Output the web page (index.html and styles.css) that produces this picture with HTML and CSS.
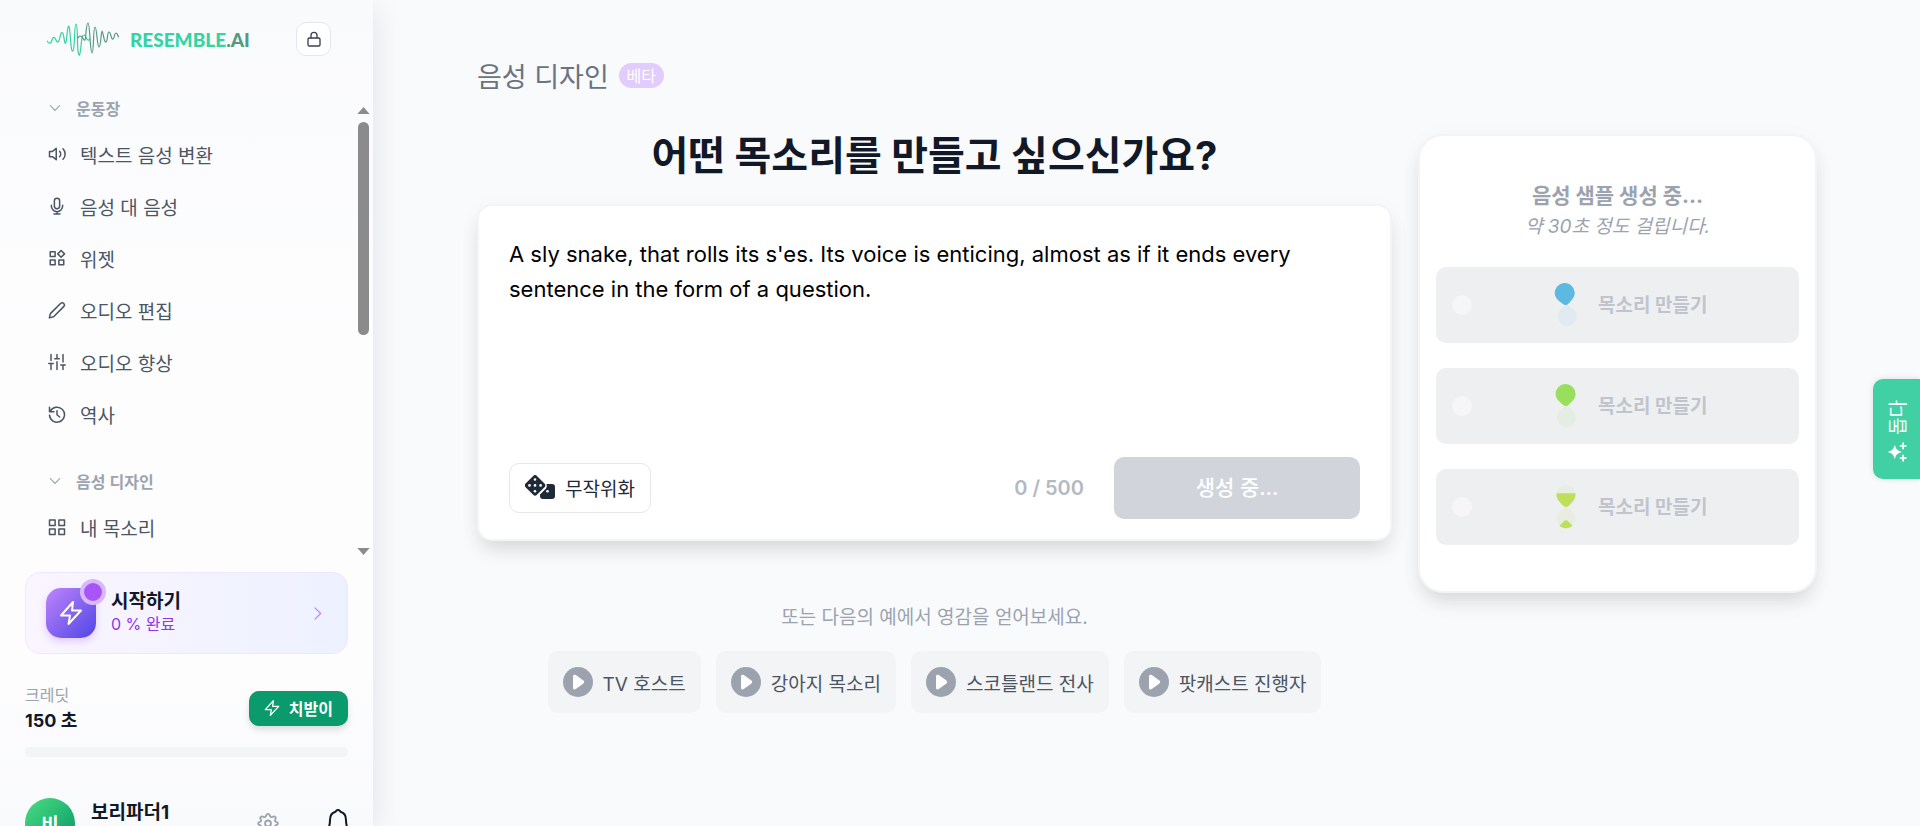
FILE: index.html
```html
<!DOCTYPE html>
<html lang="ko">
<head>
<meta charset="utf-8">
<meta name="viewport" content="width=device-width, initial-scale=1">
<title>음성 디자인 - Resemble.AI</title>
<link rel="stylesheet" href="styles.css">
</head>
<body>
<div class="app">
  <aside class="sidebar">
    <header class="brand">
      <a class="logo" href="#" aria-label="Resemble.AI">
        <svg class="wave" viewBox="0 0 72 34" fill="none" stroke-width="1.2" stroke-linecap="round" stroke-linejoin="round">
          <path stroke="#35d0a0" d="M0 19c2 3 4 3 5-1s3-3 4 0 3 3 4-3 3-6 4 1 2 8 3-3 2-12 3-2 1 19 3 18 1-27 3-27 1 20 2 27 2 5 3-5 1-11 3-11 2 3 3 4 2 2 3 0"/>
          <path stroke="#559a80" d="M31 16c1-3 3-2 4-1s2 4 3 3 1-17 3-17 2 30 4 30 1-26 3-26 2 20 4 20 2-16 3-16 2 12 4 11 1-10 3-10 2 8 4 7 1-6 3-6 1 3 3 4"/>
        </svg>
        <span class="logo-text">RESEMBLE<span class="logo-ai">.AI</span></span>
      </a>
      <button class="lock" type="button" aria-label="잠금">
        <svg class="icon" viewBox="0 0 24 24"><rect x="3" y="10.500" width="18" height="12" rx="2"/><path d="M7.500 10.500V6.500a4.500 4.500 0 0 1 9 0v4"/></svg>
      </button>
    </header>

    <div class="nav-area">
      <nav class="nav">
        <button class="section" type="button"><svg class="icon chev" viewBox="0 0 24 24"><path d="m4 8 8 8 8-8"/></svg>운동장</button>
        <ul class="items">
          <li><a href="#"><svg class="icon" viewBox="0 0 24 24"><path d="M2 8.500h4l5-4v15l-5-4H2z"/><path d="M15.500 8.500a5 5 0 0 1 0 7M20 5a10 10 0 0 1 0 14"/></svg>텍스트 음성 변환</a></li>
          <li><a href="#"><svg class="icon" viewBox="0 0 24 24"><rect x="8.500" y="1.500" width="7" height="14" rx="3.500"/><path d="M4.500 11v1a7.500 7.500 0 0 0 15 0v-1M12 19.500v3M8 22.500h8"/></svg>음성 대 음성</a></li>
          <li><a href="#"><svg class="icon" viewBox="0 0 24 24"><path d="M3 3.500h6.500V10H3zM3 14.500h6.500V21H3zM14.500 14.500H21V21h-6.500zM17.500 2l4.500 4.500-4.500 4.500L13 6.500z"/></svg>위젯</a></li>
          <li><a href="#"><svg class="icon" viewBox="0 0 24 24"><path d="M17 3a3 3 0 0 1 4.200 4.200L7.500 21 1.800 22.500 3.200 16.800z"/></svg>오디오 편집</a></li>
          <li><a href="#"><svg class="icon" viewBox="0 0 24 24"><path d="M4 2v8M4 14v8M12 2v5M12 11.500V22M20 2v10M20 16v6M1 14h6M9 7.500h6M17 16h6"/></svg>오디오 향상</a></li>
          <li><a href="#"><svg class="icon" viewBox="0 0 24 24"><path d="M3 8.500a10 10 0 1 1-1 5M2 3v6h6M12 7.500V13l3.500 3"/></svg>역사</a></li>
        </ul>
        <button class="section" type="button"><svg class="icon chev" viewBox="0 0 24 24"><path d="m4 8 8 8 8-8"/></svg>음성 디자인</button>
        <ul class="items">
          <li><a href="#"><svg class="icon" viewBox="0 0 24 24"><path d="M2 2.500h7.500V10H2zM14.500 2.500H22V10h-7.500zM2 14.500h7.500V22H2zM14.500 14.500H22V22h-7.500z"/></svg>내 목소리</a></li>
        </ul>
      </nav>
      <div class="scroll" aria-hidden="true">
        <svg viewBox="0 0 14 8"><path d="M0 8 7 0l7 8z"/></svg>
        <div class="thumb"></div>
        <svg class="down" viewBox="0 0 14 8"><path d="M0 0h14L7 8z"/></svg>
      </div>
    </div>

    <a class="start" href="#">
      <span class="start-icon"><svg class="icon" viewBox="0 0 24 24"><path d="M14 1 2 14.500h9L9.500 23 22 9.500h-9z"/></svg><span class="dot"></span></span>
      <span class="start-text"><strong>시작하기</strong><span>0 % 완료</span></span>
      <svg class="icon arrow" viewBox="0 0 24 24"><path d="m8 3 9 9-9 9"/></svg>
    </a>

    <div class="credits">
      <div class="credit-text"><span>크레딧</span><strong>150 초</strong></div>
      <button class="upgrade" type="button"><svg class="icon" viewBox="0 0 24 24"><path d="M14 1 2 14.500h9L9.500 23 22 9.500h-9z"/></svg>치받이</button>
    </div>
    <div class="bar"></div>

    <footer class="user">
      <span class="avatar">비</span>
      <strong class="user-name">보리파더1</strong>
      <button class="gear" type="button" aria-label="설정">
        <svg class="icon" viewBox="0 0 24 24"><path d="M10 4.200C10.400 1.300 13.600 1.300 14 4.200a2 2 0 0 0 2.900 1.200c2.400-1.700 4.600.5 2.900 2.800a2 2 0 0 0 1 2.600c2.700.4 2.700 3.200 0 3.600a2 2 0 0 0-1.200 2.700c1.700 2.400-.4 4.500-2.800 2.800a2 2 0 0 0-2.800 1.100c-.4 2.700-3.600 2.700-4 0a2 2 0 0 0-2.800-1.100c-2.400 1.700-4.500-.4-2.800-2.800a2 2 0 0 0-1.200-2.700c-2.700-.4-2.700-3.200 0-3.600a2 2 0 0 0 1.100-2.600c-1.800-2.300.4-4.500 2.800-2.800A2 2 0 0 0 10 4.200z"/><circle cx="12" cy="12.500" r="3.200"/></svg>
      </button>
      <button class="bell" type="button" aria-label="알림">
        <svg class="icon" viewBox="0 0 24 30"><path d="M12 2c-1.500 0-2 .8-2.500 1.800C5.500 4.800 4 8 4 12c0 5-1 8-3 11h22c-2-3-3-6-3-11 0-4-1.500-7.200-5.500-8.200C14 2.800 13.500 2 12 2z"/></svg>
      </button>
    </footer>
  </aside>

  <main class="main">
    <div class="content">
      <div class="page-title"><span>음성 디자인</span><span class="beta">베타</span></div>
      <div class="columns">
        <section class="left">
          <h1>어떤 목소리를 만들고 싶으신가요?</h1>
          <form class="card prompt">
            <textarea aria-label="목소리 설명" spellcheck="false">A sly snake, that rolls its s'es. Its voice is enticing, almost as if it ends every sentence in the form of a question.</textarea>
            <div class="actions">
              <button class="random" type="button">
                <svg viewBox="0 0 30 24" fill="#1f2937"><path d="M8.200.9a2.600 2.600 0 0 1 3.700 0l7.600 7.600a2.600 2.600 0 0 1 0 3.700l-7.600 7.600a2.600 2.600 0 0 1-3.700 0L.6 12.200a2.600 2.600 0 0 1 0-3.700z"/><path d="M21.500 9H27a3 3 0 0 1 3 3v9a3 3 0 0 1-3 3h-9a3 3 0 0 1-3-3v-1.500l6-6a4 4 0 0 0 .5-4.500z"/><g fill="#fff"><circle cx="10" cy="4.500" r="1.300"/><circle cx="4.500" cy="10.400" r="1.300"/><circle cx="10" cy="10.400" r="1.300"/><circle cx="15.600" cy="10.400" r="1.300"/><circle cx="10" cy="16.200" r="1.300"/><circle cx="22.500" cy="16.200" r="1.300"/></g></svg>
                무작위화
              </button>
              <span class="count">0 / 500</span>
              <button class="generate" type="button" disabled>생성 중...</button>
            </div>
          </form>
          <p class="hint">또는 다음의 예에서 영감을 얻어보세요.</p>
          <div class="examples">
            <button type="button"><svg viewBox="0 0 30 30"><circle cx="15" cy="15" r="15" fill="#9ca3af"/><path d="M10 9.500c0-1.600 1.500-2.300 2.800-1.400l7.600 5.500c1 .7 1 2.100 0 2.800l-7.600 5.700c-1.300.9-2.800.2-2.800-1.400z" fill="#fff"/></svg>TV 호스트</button>
            <button type="button"><svg viewBox="0 0 30 30"><circle cx="15" cy="15" r="15" fill="#9ca3af"/><path d="M10 9.500c0-1.600 1.500-2.300 2.800-1.400l7.600 5.500c1 .7 1 2.100 0 2.800l-7.600 5.700c-1.300.9-2.800.2-2.800-1.400z" fill="#fff"/></svg>강아지 목소리</button>
            <button type="button"><svg viewBox="0 0 30 30"><circle cx="15" cy="15" r="15" fill="#9ca3af"/><path d="M10 9.500c0-1.600 1.500-2.300 2.800-1.400l7.600 5.500c1 .7 1 2.100 0 2.800l-7.600 5.700c-1.300.9-2.800.2-2.800-1.400z" fill="#fff"/></svg>스코틀랜드 전사</button>
            <button type="button"><svg viewBox="0 0 30 30"><circle cx="15" cy="15" r="15" fill="#9ca3af"/><path d="M10 9.500c0-1.600 1.500-2.300 2.800-1.400l7.600 5.500c1 .7 1 2.100 0 2.800l-7.600 5.700c-1.300.9-2.800.2-2.800-1.400z" fill="#fff"/></svg>팟캐스트 진행자</button>
          </div>
        </section>

        <section class="card samples">
          <h2>음성 샘플 생성 중...</h2>
          <p>약 30초 정도 걸립니다.</p>
          <div class="sample">
            <span class="pick"></span>
            <svg class="glass" viewBox="0 0 24 46"><g transform="rotate(-6 12 23)"><path fill="#5db9df" d="M12 23c-2 0-3-1.500-5-3.300C4 17.300 2 14.500 2 11a10 10 0 0 1 20 0c0 3.500-2 6.300-5 8.700-2 1.800-3 3.300-5 3.300z"/><path fill="#e1eaf1" d="M12 23c-2 0-3 1.500-5 3.300-3 2.400-4.500 4.700-4.500 8.200a9.500 9.500 0 0 0 19 0c0-3.500-1.500-5.800-4.500-8.200-2-1.800-3-3.300-5-3.300z"/></g></svg>
            <button type="button" disabled>목소리 만들기</button>
          </div>
          <div class="sample">
            <span class="pick"></span>
            <svg class="glass" viewBox="0 0 24 46"><g transform="rotate(-2 12 23)"><path fill="#99df5d" d="M12 23c-2 0-3-1.500-5-3.300C4 17.300 2 14.500 2 11a10 10 0 0 1 20 0c0 3.500-2 6.300-5 8.700-2 1.800-3 3.300-5 3.300z"/><path fill="#e5ede3" d="M12 23c-2 0-3 1.500-5 3.300-3 2.400-4.500 4.700-4.500 8.200a9.500 9.500 0 0 0 19 0c0-3.500-1.500-5.800-4.500-8.200-2-1.800-3-3.300-5-3.300z"/></g></svg>
            <button type="button" disabled>목소리 만들기</button>
          </div>
          <div class="sample">
            <span class="pick"></span>
            <svg class="glass" viewBox="0 0 24 46"><path fill="#e9ede1" d="M2.500 10.500a9.500 9.500 0 0 1 19 0zM12 23c-2 0-3 1.500-5 3.300-3 2.400-4.500 4.700-4.500 8.200a9.500 9.500 0 0 0 19 0c0-3.500-1.500-5.800-4.500-8.200-2-1.800-3-3.300-5-3.300z"/><path fill="#bfdf5b" d="M2.500 9.200h19c.5 4-1.500 7.500-4.500 10.300-2 2-3 3.500-5 3.500s-3-1.500-5-3.500c-3-2.800-5-6.300-4.500-10.300zM10.800 36.500c.8-.7 1.600-.7 2.400 0l5.300 5C15.500 45 8.500 45 5.500 41.500z"/></svg>
            <button type="button" disabled>목소리 만들기</button>
          </div>
        </section>
      </div>
    </div>
  </main>

  <button class="help" type="button">
    <svg viewBox="0 0 18 18" fill="#fff"><path d="M7 2.500c1 4 2.500 5.500 6.500 6.500-4 1-5.500 2.500-6.500 6.500C6 11.500 4.500 10 .5 9 4.500 8 6 6.500 7 2.500z"/><path d="M14.500 .5v6M11.500 3.500h6M14.500 11.500v6M11.500 14.500h6" stroke="#fff" stroke-width="1.600"/></svg>
    <span>돕다</span>
  </button>
</div>
</body>
</html>
```
FILE: styles.css
```css
* { box-sizing: border-box; }

body {
  margin: 0;
  height: 100vh;
  overflow: hidden;
  background: #f9fafc;
  color: #111827;
  font-family: Inter, "Noto Sans CJK KR", sans-serif;
  font-size: 19px;
}

button, textarea { font: inherit; color: inherit; border: 0; padding: 0; background: none; }
a { color: inherit; text-decoration: none; }
ul { list-style: none; margin: 0; padding: 0; }
h1, h2, p { margin: 0; }
svg { display: block; flex: none; }
.icon { fill: none; stroke: currentColor; stroke-width: 2; stroke-linecap: round; stroke-linejoin: round; }

.app { display: flex; height: 100vh; }

.sidebar {
  width: 373px;
  flex: none;
  height: 100vh;
  overflow: hidden;
  display: flex;
  flex-direction: column;
  background: linear-gradient(#f9fafc, #fdfdfe 40%, #fdfdfe 80%, #f9fafc);
  box-shadow: 0 8px 30px rgba(15, 23, 42, .1);
}
.brand {
  display: flex;
  align-items: center;
  justify-content: space-between;
  padding: 22px 42px 0 47px;
}
.logo { display: flex; align-items: center; gap: 11px; }
.wave { width: 72px; height: 34px; }
.logo-text { font-family: Lato, sans-serif; font-weight: 900; font-size: 19px; color: #33d3a3; }
.logo-ai { color: #559a80; }
.lock {
  width: 35px;
  height: 34px;
  border: 1px solid #e5e7eb;
  border-radius: 10px;
  background: #fff;
  color: #374151;
  display: grid;
  place-items: center;
}
.lock svg { width: 16px; height: 16px; }

.nav-area { display: flex; justify-content: space-between; margin-top: 34px; height: 470px; flex: none; }
.nav { padding-left: 48px; }
.section {
  display: flex;
  align-items: center;
  gap: 14px;
  height: 36px;
  font-size: 16px;
  font-weight: 600;
  color: #9ca3af;
}
.chev { width: 14px; height: 14px; }
.items { display: flex; flex-direction: column; gap: 8px; margin: 6px 0 27px; }
.items a { display: flex; align-items: center; gap: 14px; height: 44px; color: #4b5563; }
.items .icon { width: 18px; height: 18px; }
.scroll { width: 20px; padding-top: 17px; display: flex; flex-direction: column; align-items: center; gap: 8px; }
.scroll svg { width: 13px; height: 7px; fill: #8b8b8b; }
.thumb { width: 11px; height: 213px; border-radius: 6px; background: #8b8b8b; }
.scroll .down { margin-top: auto; margin-bottom: 5px; }

.start {
  display: flex;
  align-items: center;
  gap: 15px;
  margin: 12px 25px 0;
  height: 82px;
  flex: none;
  padding: 0 22px 0 20px;
  border: 1px solid #f0e6ff;
  border-radius: 15px;
  background: linear-gradient(90deg, #faf5ff, #edf1ff);
}
.start-icon {
  position: relative;
  display: grid;
  place-items: center;
  width: 50px;
  height: 50px;
  border-radius: 15px;
  background: linear-gradient(135deg, #c084fc, #4f46e5);
  color: #fff;
  box-shadow: 0 4px 7px rgba(168, 85, 247, .25);
}
.start-icon svg { width: 24px; height: 24px; }
.dot {
  position: absolute;
  top: -9px;
  right: -10px;
  width: 26px;
  height: 26px;
  border-radius: 50%;
  background: #a855f7;
  border: 4px solid #d9b8fb;
}
.start-text { flex: 1; display: flex; flex-direction: column; line-height: 23px; }
.start-text strong { font-size: 19px; }
.start-text span { font-size: 16px; color: #9333ea; }
.arrow { width: 15px; height: 15px; color: #c084fc; }

.credits { display: flex; justify-content: space-between; align-items: center; margin: 28px 25px 0; height: 52px; flex: none; }
.credit-text { display: flex; flex-direction: column; line-height: 26px; }
.credit-text span { font-size: 16px; color: #9ca3af; }
.credit-text strong { font-size: 18px; }
.upgrade {
  display: flex;
  align-items: center;
  gap: 9px;
  height: 35px;
  padding: 0 15px;
  border-radius: 10px;
  background: #0a9a6b;
  color: #fff;
  font-size: 16px;
  font-weight: 700;
  box-shadow: 0 4px 6px rgba(0, 0, 0, .12);
}
.upgrade svg { width: 16px; height: 16px; }
.bar { height: 10px; flex: none; margin: 13px 25px 0; border-radius: 5px; background: #f3f4f6; }

.user { display: flex; align-items: center; margin: 41px 25px 0; height: 50px; flex: none; }
.avatar {
  width: 50px;
  height: 50px;
  border-radius: 50%;
  display: grid;
  place-items: center;
  color: #fff;
  font-size: 19px;
  font-weight: 700;
  background: linear-gradient(135deg, #4ade80, #059669);
}
.user-name { flex: 1; align-self: flex-start; margin-left: 16px; font-size: 19px; line-height: 30px; }
.gear { color: #9ca3af; }
.gear svg { width: 22px; height: 22px; }
.bell { margin-left: 47px; margin-right: -2px; color: #111827; }
.bell svg { width: 24px; height: 30px; }

.main { flex: 1; min-width: 0; padding: 59px 103px 0 104px; }
.content { max-width: 1600px; margin: 0 auto; }
.page-title { display: flex; align-items: center; gap: 10px; height: 32px; font-size: 27px; color: #6b7280; }
.beta {
  display: grid;
  place-items: center;
  width: 45px;
  height: 25px;
  border-radius: 13px;
  background: #e2ccfd;
  color: #fff;
  font-size: 16px;
}
.columns { display: grid; grid-template-columns: minmax(0, 1fr) 399px; gap: 26px; margin-top: 43px; align-items: start; }
h1 { font-size: 40px; line-height: 44px; font-weight: 700; text-align: center; }
.card {
  background: #fff;
  border: 2px solid #f3f4f6;
  box-shadow: 0 12px 20px -4px rgba(0, 0, 0, .12), 0 4px 24px rgba(0, 0, 0, .03);
}
.prompt { margin-top: 26px; padding: 31px 30px 20px; border-radius: 15px; }
textarea {
  display: block;
  width: 100%;
  height: 220px;
  resize: none;
  outline: 0;
  color: #000;
  font-size: 22px;
  line-height: 35px;
}
.actions { display: flex; align-items: center; }
.random {
  display: flex;
  align-items: center;
  gap: 10px;
  height: 50px;
  padding: 0 15px 2px;
  border: 1px solid #e5e7eb;
  border-radius: 10px;
  color: #1f2937;
}
.random svg { width: 30px; height: 24px; }
.count { margin-left: auto; margin-right: 30px; font-size: 20px; font-weight: 600; color: #b4b9c3; }
.generate { width: 246px; height: 62px; padding-bottom: 4px; border-radius: 10px; background: #d1d5db; color: #fff; font-size: 21px; font-weight: 500; }

.hint { margin-top: 62px; text-align: center; line-height: 30px; color: #9ca3af; }
.examples { display: flex; flex-wrap: wrap; justify-content: center; gap: 15px; margin-top: 18px; }
.examples button {
  display: flex;
  align-items: center;
  gap: 10px;
  height: 62px;
  padding: 0 15px;
  border-radius: 10px;
  background: #f3f4f6;
  color: #4b5563;
}
.examples svg { width: 30px; height: 30px; }

.samples { display: flex; flex-direction: column; border-radius: 25px; padding: 44px 16px 46px; }
.samples h2, .samples p { text-align: center; color: #9ca3af; line-height: 31px; }
.samples h2 { font-size: 21px; font-weight: 700; }
.samples p { font-style: italic; }
.sample {
  display: flex;
  align-items: center;
  height: 76px;
  margin-top: 25px;
  padding: 0 16px;
  border-radius: 10px;
  background: #eeeff1;
}
.pick { width: 20px; height: 20px; border-radius: 50%; background: #f6f6f8; }
.glass { width: 24px; height: 46px; margin-left: 82px; }
.sample button { margin-left: 20px; padding-bottom: 4px; color: #c0c4cd; font-weight: 700; }

.help {
  position: absolute;
  right: 0;
  top: 379px;
  width: 47px;
  height: 100px;
  display: flex;
  flex-direction: column-reverse;
  align-items: center;
  justify-content: center;
  gap: 8px;
  padding-top: 4px;
  border-radius: 10px 0 0 10px;
  background: #40d0a4;
  color: #fff;
  box-shadow: 0 0 6px rgba(0, 0, 0, .12);
}
.help svg { width: 20px; height: 20px; }
.help span { writing-mode: vertical-rl; text-orientation: sideways; transform: rotate(180deg); }
```
